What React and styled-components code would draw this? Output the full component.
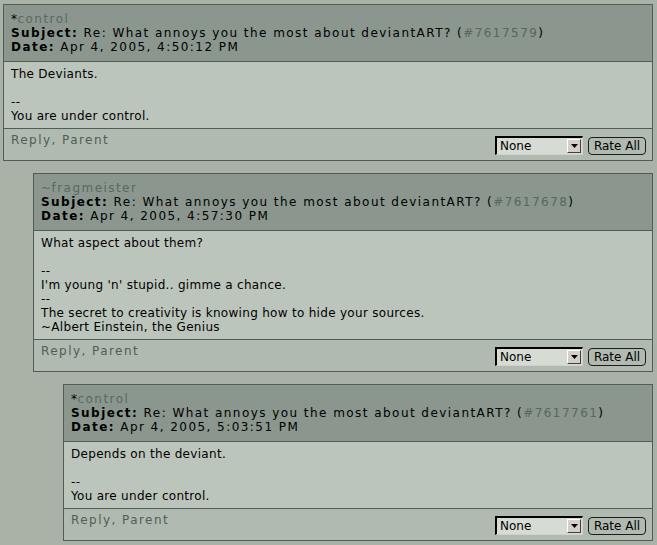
import React from "react";
import styled, { createGlobalStyle } from "styled-components";

const Global = createGlobalStyle`
  html, body { margin: 0; padding: 0; background: #aab2a8; }
  body { font-family: "DejaVu Sans", Verdana, sans-serif; font-size: 12px; color: #000; }
`;

const Page = styled.div`
  padding: 4px 4px 0 3px;
  width: 657px;
  height: 545px;
  box-sizing: border-box;
  overflow: hidden;
`;

const Thread = styled.div`
  display: flex;
  flex-direction: column;
  gap: 12px;
`;

const Replies = styled.div`
  display: flex;
  flex-direction: column;
  gap: 12px;
  padding-left: 30px;
`;

const Box = styled.div`
  border: 1px solid #4f5e55;
  background: #b1bab0;
`;

const Header = styled.div`
  background: #8a968e;
  border-bottom: 1px solid #4f5e55;
  padding: 7px 7px;
  line-height: 14px;
  font-size: 12px;
  letter-spacing: 1.45px;
`;

const Line = styled.div`
  white-space: nowrap;
`;

const Mark = styled.span`
  color: ${(p) => (p.$muted ? "#5a6961" : "#000")};
  letter-spacing: 0.5px;
`;

const Username = styled.span`
  color: #5a6961;
`;

const Label = styled.b`
  font-weight: bold;
`;

const Ref = styled.span`
  color: #58675f;
`;

const Body = styled.div`
  background: #bcc5bc;
  border-bottom: 1px solid #4f5e55;
  padding: 5px 7px;
  line-height: 14px;
  font-size: 12px;
  letter-spacing: 0.3px;
  min-height: 56px;
`;

const Footer = styled.div`
  display: flex;
  justify-content: space-between;
  align-items: flex-start;
  padding: 4px 6px 5px 7px;
`;

const Links = styled.div`
  color: #4f5e56;
  font-size: 12px;
  letter-spacing: 1.45px;
  line-height: 15px;
`;

const Controls = styled.div`
  display: flex;
  align-items: center;
  gap: 5px;
  margin-top: 3px;
`;

const Select = styled.div`
  width: 88px;
  height: 19px;
  box-sizing: border-box;
  display: flex;
  align-items: center;
  justify-content: space-between;
  background: #d6dbd4;
  border-top: 2px solid #000;
  border-left: 2px solid #000;
  border-right: 1px solid #d4d0c8;
  border-bottom: 1px solid #d4d0c8;
  padding-left: 3px;
  font-size: 12px;
`;

const Arrow = styled.div`
  width: 14px;
  height: 14px;
  box-sizing: border-box;
  margin-right: 1px;
  background: #d4d0c8;
  border-top: 1px solid #fff;
  border-left: 1px solid #fff;
  border-right: 1px solid #404040;
  border-bottom: 1px solid #404040;
  display: flex;
  align-items: center;
  justify-content: center;
`;

const Button = styled.button`
  height: 18px;
  width: 58px;
  padding: 0;
  border: 1px solid #1c1c1c;
  border-radius: 4px;
  background: transparent;
  font-family: "DejaVu Sans", Verdana, sans-serif;
  font-size: 12px;
  line-height: 14px;
  color: #000;
`;

function Comment({ prefix, mutedPrefix, user, id, date, lines, children }) {
  return (
    <>
      <Box>
        <Header>
          <Line>
            <Mark $muted={mutedPrefix}>{prefix}</Mark>
            <Username>{user}</Username>
          </Line>
          <Line>
            <Label>Subject:</Label> Re: What annoys you the most about deviantART? (<Ref>#{id}</Ref>)
          </Line>
          <Line>
            <Label>Date:</Label> {date}
          </Line>
        </Header>
        <Body>
          {lines.map((l, i) => (
            <Line key={i}>{l || "\u00a0"}</Line>
          ))}
        </Body>
        <Footer>
          <Links>Reply, Parent</Links>
          <Controls>
            <Select>
              <span>None</span>
              <Arrow>
                <svg width="7" height="4" viewBox="0 0 7 4">
                  <path d="M0 0h7L3.5 4z" fill="#000" />
                </svg>
              </Arrow>
            </Select>
            <Button>Rate All</Button>
          </Controls>
        </Footer>
      </Box>
      {children && <Replies>{children}</Replies>}
    </>
  );
}

export default function App() {
  return (
    <Page>
      <Global />
      <Thread>
        <Comment
          prefix="*"
          user="control"
          id="7617579"
          date="Apr 4, 2005, 4:50:12 PM"
          lines={["The Deviants.", "", "--", "You are under control."]}
        >
          <Comment
            prefix="~"
            mutedPrefix
            user="fragmeister"
            id="7617678"
            date="Apr 4, 2005, 4:57:30 PM"
            lines={[
              "What aspect about them?",
              "",
              "--",
              "I'm young 'n' stupid.. gimme a chance.",
              "--",
              "The secret to creativity is knowing how to hide your sources.",
              "~Albert Einstein, the Genius",
            ]}
          >
            <Comment
              prefix="*"
              user="control"
              id="7617761"
              date="Apr 4, 2005, 5:03:51 PM"
              lines={["Depends on the deviant.", "", "--", "You are under control."]}
            />
          </Comment>
        </Comment>
      </Thread>
    </Page>
  );
}
